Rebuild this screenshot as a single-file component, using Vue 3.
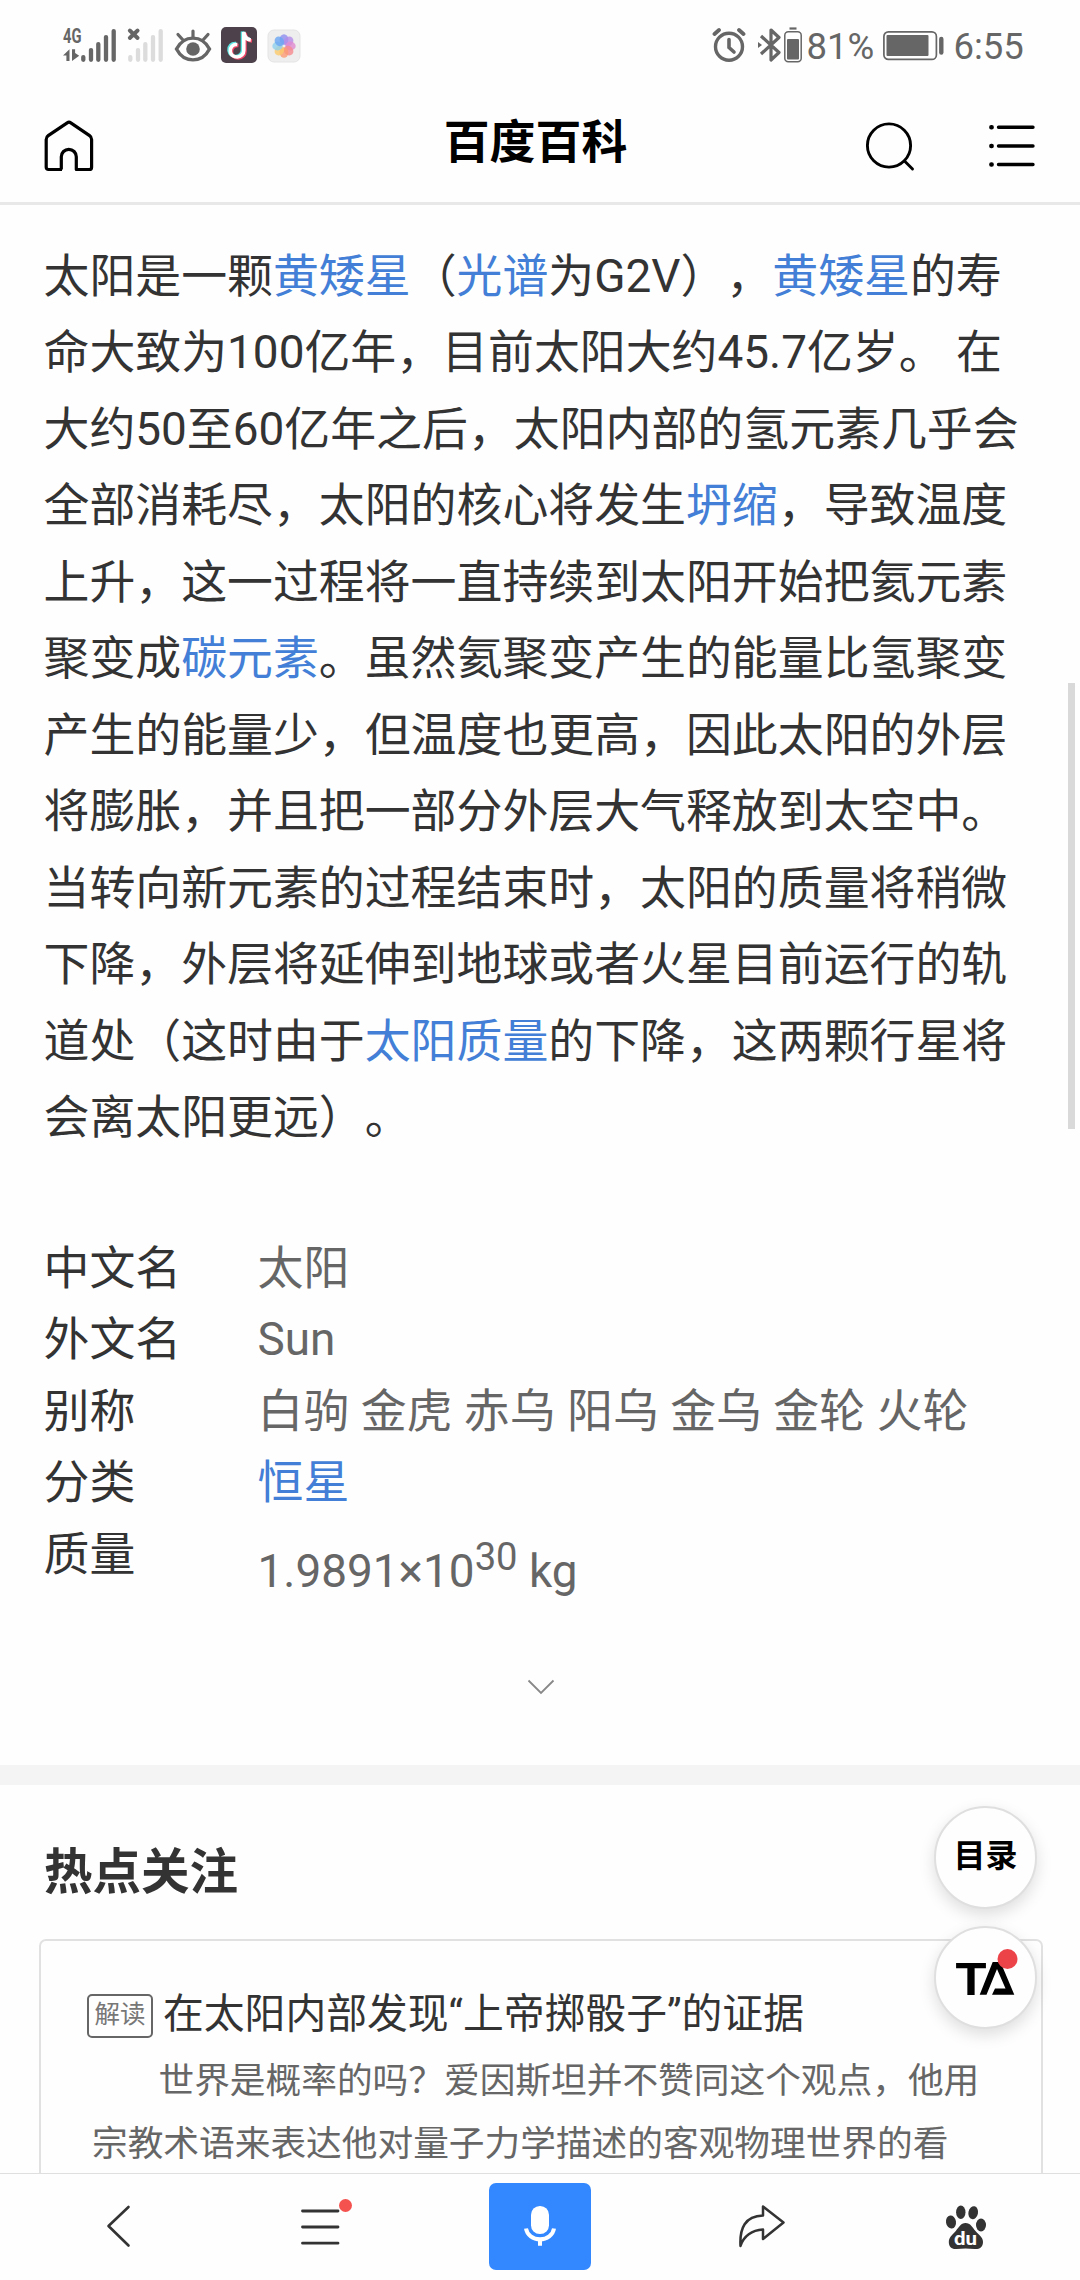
<script setup>
const paragraph = [
  [['太阳是一颗'], ['黄矮星', 1], ['（'], ['光谱', 1], ['为G2V），'], ['黄矮星', 1], ['的寿']],
  [['命大致为100亿年，目前太阳大约45.7亿岁。 在']],
  [['大约50至60亿年之后，太阳内部的氢元素几乎会']],
  [['全部消耗尽，太阳的核心将发生'], ['坍缩', 1], ['，导致温度']],
  [['上升，这一过程将一直持续到太阳开始把氦元素']],
  [['聚变成'], ['碳元素', 1], ['。虽然氦聚变产生的能量比氢聚变']],
  [['产生的能量少，但温度也更高，因此太阳的外层']],
  [['将膨胀，并且把一部分外层大气释放到太空中。']],
  [['当转向新元素的过程结束时，太阳的质量将稍微']],
  [['下降，外层将延伸到地球或者火星目前运行的轨']],
  [['道处（这时由于'], ['太阳质量', 1], ['的下降，这两颗行星将']],
  [['会离太阳更远）。']],
]

const facts = [
  { name: '中文名', value: '太阳' },
  { name: '外文名', value: 'Sun' },
  { name: '别称', value: '白驹 金虎 赤乌 阳乌 金乌 金轮 火轮' },
  { name: '分类', value: '恒星', link: true },
]

const bars = [
  { x: 20.3, y: 28 },
  { x: 28, y: 21 },
  { x: 35.3, y: 15 },
  { x: 43, y: 8 },
  { x: 50.7, y: 2 },
]

const petals = [
  { a: 0, c: '#8f8df0' },
  { a: 45, c: '#b58ce8' },
  { a: 90, c: '#e08ad0' },
  { a: 135, c: '#f58a8e' },
  { a: 180, c: '#fb9a72' },
  { a: 225, c: '#fbcb6c' },
  { a: 270, c: '#8ed0ee' },
  { a: 315, c: '#6aa5f2' },
]
</script>

<template>
  <div class="screen" lang="zh-CN">
    <div class="status">
      <svg class="signal" width="54" height="36" viewBox="0 0 54 36">
        <text x="0" y="16" font-size="20" font-weight="700" textLength="18.500" lengthAdjust="spacingAndGlyphs" fill="#666">4G</text>
        <path d="M0 28.500L6.500 22.300V34H3.400V28.500zM9 22.300H12.100V26L16.200 28.800L9 34z" fill="#666" />
        <path v-for="b in bars" :key="b.x" :d="`M${b.x} ${b.y + 2.1}V32.8`" stroke="#666" stroke-width="4.300" stroke-linecap="round" />
      </svg>
      <svg class="signal-off" width="36" height="36" viewBox="17 0 36 36">
        <path v-for="b in bars" :key="b.x" :d="`M${b.x} ${b.y + 2.1}V32.8`" stroke="#dcdcdc" stroke-width="4.300" stroke-linecap="round" />
        <path d="M19.800 3.500l7.800 7.500M27.600 3.500l-7.800 7.500" stroke="#666" stroke-width="3.900" stroke-linecap="round" />
      </svg>
      <svg class="eye" width="38" height="36" viewBox="0 0 38 36">
        <path d="M2.500 22C10 7.500 28 7.500 35.500 22C28 36.500 10 36.500 2.500 22z" fill="none" stroke="#666" stroke-width="3.400" />
        <circle cx="19" cy="22" r="6.800" fill="#666" />
        <path d="M19 10V4M9 13L4 7.500M29 13l5-5.500" stroke="#666" stroke-width="3.200" stroke-linecap="round" />
      </svg>
      <svg class="tiktok" width="36" height="36" viewBox="0 0 36 36">
        <rect width="36" height="36" rx="5" fill="#4d424b" />
        <g fill="none" stroke-width="3.600">
          <path d="M15 16.500c-4.500-.5-7.500 3-7 7 .5 3.500 3.500 6 7 6s6.500-3 6.500-6.500V4.500c.5 4.500 3 7 7 7.500" stroke="#5de6e4" />
          <path d="M17.500 18.500c-4.500-.5-7.500 3-7 7 .5 3.500 3.500 5.500 7 5.500s6.500-3 6.500-6.500V6c.5 4.500 3 7.500 7 8" stroke="#ef4868" />
          <path d="M16.300 17.500c-4.500-.5-7.500 3-7 7 .5 3.500 3.500 5.500 7 5.500s6.500-3 6.500-6.500V5c.5 4.500 3 7.500 7 8" stroke="#fff" />
        </g>
      </svg>
      <svg class="gallery" width="34" height="34" viewBox="0 0 34 34">
        <rect x="1" y="1" width="32" height="32" rx="6" fill="#eee" stroke="#e4e4e4" />
        <ellipse v-for="p in petals" :key="p.a" cx="17" cy="10.500" rx="4.400" ry="5.200" :fill="p.c" fill-opacity=".8" :transform="`rotate(${p.a} 17 17)`" />
      </svg>

      <svg class="alarm" width="34" height="36" viewBox="0 0 34 36">
        <g fill="none" stroke="#666" stroke-linecap="round">
          <circle cx="17" cy="19.700" r="13.500" stroke-width="3.400" />
          <path d="M17 12.500v8l5 4.500" stroke-width="3.600" />
          <path d="M2.500 7l4.500-4M31.500 7L27 3" stroke-width="3.800" />
        </g>
      </svg>
      <svg class="bluetooth" width="24" height="36" viewBox="0 0 24 36">
        <path d="M3 9l18 16.500-8 7.500V3l8 7.500L3 27" fill="none" stroke="#666" stroke-width="3.200" stroke-linejoin="round" />
        <path d="M0 15l4 3-4 3z" fill="#666" />
      </svg>
      <svg class="cell" width="18" height="36" viewBox="0 0 18 36">
        <path d="M5.500 1.500h7" stroke="#666" stroke-width="2.200" />
        <rect x=".8" y="4.800" width="16.400" height="30" rx="3.500" fill="none" stroke="#666" stroke-width="1.500" />
        <rect x="3" y="12" width="12" height="20.500" rx="1" fill="#666" />
      </svg>
      <span class="percent">81%</span>
      <svg class="battery" width="61" height="30" viewBox="0 0 61 30">
        <rect x=".9" y=".9" width="52.500" height="27.500" rx="4.500" fill="none" stroke="#666" stroke-width="1.700" />
        <rect x="3.500" y="4" width="42" height="21" rx="1" fill="#666" />
        <path d="M58.300 8v13.500" stroke="#666" stroke-width="4.400" stroke-linecap="round" />
      </svg>
      <span class="clock">6:55</span>
    </div>

    <header class="header">
      <svg class="home" width="52" height="54" viewBox="0 0 52 54" fill="none" stroke="#000" stroke-width="3.200" stroke-linejoin="round">
        <path d="M19 51.500H5.500Q3.200 51.500 3.200 49.200V21.500Q3.200 19 5.200 17.600L24.200 4.800Q26 3.600 27.800 4.800L46.600 17.600Q48.600 19 48.600 21.500V49.200Q48.600 51.500 46.300 51.500H33.300V38.800a7.500 7.500 0 0 0-15 0V51.500" />
      </svg>
      <h1>百度百科</h1>
      <div class="actions">
        <svg width="54" height="54" viewBox="0 0 54 54" fill="none" stroke="#000" stroke-width="2.900" stroke-linecap="round">
          <circle cx="27" cy="26.500" r="21.600" />
          <path d="M42.500 42l8 8" />
        </svg>
        <svg width="50" height="44" viewBox="0 0 50 44" stroke="#000" stroke-width="3.400" stroke-linecap="round">
          <path d="M11.500 3.300H46M11.500 22H46M11.500 40.500H46" />
          <path d="M4.300 3.300h.4M4.300 22h.4M4.300 40.500h.4" stroke-width="4.400" />
        </svg>
      </div>
    </header>

    <main class="content">
      <p class="summary">
        <span v-for="(line, i) in paragraph" :key="i" class="line"><template v-for="(seg, j) in line" :key="j"><a v-if="seg[1]">{{ seg[0] }}</a><template v-else>{{ seg[0] }}</template></template></span>
      </p>

      <dl class="facts">
        <div v-for="f in facts" :key="f.name" class="fact">
          <dt>{{ f.name }}</dt>
          <dd><a v-if="f.link">{{ f.value }}</a><template v-else>{{ f.value }}</template></dd>
        </div>
        <div class="fact">
          <dt>质量</dt>
          <dd class="mass">1.9891×10<sup>30</sup> kg</dd>
        </div>
      </dl>

      <div class="expand">
        <svg width="30" height="18" viewBox="0 0 30 18" fill="none" stroke="#888" stroke-width="1.800">
          <path d="M2.500 2.500L15 15 27.500 2.500" />
        </svg>
      </div>

      <section class="hot">
        <h2>热点关注</h2>
        <article class="card">
          <div class="card-title"><span class="tag">解读</span><span>在太阳内部发现“上帝掷骰子”的证据</span></div>
          <p><span class="line first">世界是概率的吗？爱因斯坦并不赞同这个观点，他用</span><span class="line">宗教术语来表达他对量子力学描述的客观物理世界的看</span></p>
        </article>
      </section>
    </main>

    <nav class="toolbar">
      <svg width="216" height="106" viewBox="0 0 216 106" fill="none" stroke="#333" stroke-width="2.600" stroke-linecap="round" stroke-linejoin="round">
        <path d="M128.500 33L108.500 52l20 19.500" />
      </svg>
      <svg width="216" height="106" viewBox="216 0 216 106">
        <path d="M302.500 37H338M302.500 53H338M302.500 69.200H338" stroke="#333" stroke-width="2.800" stroke-linecap="round" />
        <circle cx="345.500" cy="31.500" r="6.500" fill="#f4524f" />
      </svg>
      <div class="mic">
        <svg width="102" height="87" viewBox="0 0 102 87">
          <rect x="42" y="23" width="18" height="28" rx="8.800" fill="#fff" />
          <path d="M37 45.500c1 6.500 7 10.800 14 10.800s13-4.300 14-10.800M51 56v6.800" fill="none" stroke="#fff" stroke-width="4" />
        </svg>
      </div>
      <svg width="216" height="106" viewBox="648 0 216 106" fill="none" stroke="#333" stroke-width="2.500" stroke-linejoin="round">
        <path d="M763 32.500L783.500 48.500L763 65V55.500C752 56 743.500 62 740.500 72C739.500 54 745 42 763 41.500z" />
      </svg>
      <svg width="216" height="106" viewBox="864 0 216 106" fill="#333">
        <ellipse cx="951" cy="48" rx="5" ry="6.600" transform="rotate(-8 951 48)" />
        <ellipse cx="960.800" cy="38.200" rx="4.700" ry="6.800" />
        <ellipse cx="973.200" cy="38.700" rx="4.800" ry="6.500" transform="rotate(12 973.2 38.7)" />
        <ellipse cx="981" cy="51" rx="5" ry="6.500" />
        <path d="M965.500 49c5 0 7 4.500 10 8 3.500 4 7.500 6 7.500 11 0 6-4.500 7.500-8.500 7-6-.7-12-.7-18 0-4.500.5-7.700-2-7.700-7 0-5 4-7.500 7-11 3-3.600 5-8 9.700-8z" />
        <text x="954" y="70.500" fill="#fff" font-size="18" font-weight="700" textLength="23" lengthAdjust="spacingAndGlyphs">du</text>
      </svg>
    </nav>

    <div class="scrollbar"></div>
    <div class="floats">
      <div class="fab">目录</div>
      <div class="fab">
        <svg width="99" height="99" viewBox="0 0 99 99">
          <text x="19.500" y="66.700" font-size="47" font-weight="700" textLength="31" lengthAdjust="spacingAndGlyphs" fill="#000" class="mark">T</text>
          <path d="M43.700 66.700L56.700 34H64.500L78.300 66.700H56L59 60.500H69.500L61 41L50.500 66.700z" fill="#000" />
          <circle cx="71.500" cy="31" r="10" fill="#ec4349" />
        </svg>
      </div>
    </div>
  </div>
</template>

<style>
body {
  margin: 0;
  background: #fefefe;
}
</style>

<style scoped>
.screen {
  position: relative;
  display: flex;
  flex-direction: column;
  width: 1080px;
  height: 2280px;
  overflow: hidden;
  background: #fefefe;
  color: #333;
  font-family: Roboto, "Noto Sans CJK SC", sans-serif;
  text-spacing-trim: space-all;
}
svg {
  display: block;
  flex: none;
}
.signal {
  overflow: visible;
}
h1, h2, p, dl, dd {
  margin: 0;
}
a {
  color: #437fd6;
}
.status {
  display: flex;
  align-items: flex-start;
  height: 65px;
  padding: 27px 0 0 63px;
  box-sizing: border-box;
  flex: none;
  color: #666;
  font-size: 36.5px;
  line-height: 36px;
}
.signal-off { margin-left: 10px; }
.eye { margin-left: 11px; }
.tiktok { margin-left: 9px; }
.gallery { margin: 2px 0 0 10px; }
.alarm { margin-left: 411px; }
.bluetooth { margin-left: 12px; }
.cell { margin-left: 2px; }
.percent {
  width: 76px;
  margin: 2px 0 0 4.5px;
}
.battery { margin: 4px 0 0; }
.clock { margin: 2px 0 0 10px; }

.header {
  display: grid;
  grid-template-columns: 1fr auto 1fr;
  align-items: center;
  height: 140px;
  padding: 0 52px 0 43px;
  box-sizing: border-box;
  border-bottom: 3px solid #e8e8e8;
  flex: none;
}
.home { margin-top: 23px; }
h1 {
  height: 76px;
  padding-top: 16px;
  color: #000;
  font-size: 45.9px;
  line-height: 76px;
  font-weight: 700;
}
.actions {
  display: flex;
  align-items: center;
  justify-content: flex-end;
  gap: 71px;
  margin: 24px -9px 0 0;
}

.content {
  flex: 1;
  min-height: 0;
  overflow: hidden;
  padding-top: 32.6px;
  box-sizing: border-box;
}
.line {
  display: block;
  white-space: pre;
}
.summary {
  padding-left: 43.5px;
  font-size: 45.9px;
  line-height: 76.5px;
}
.facts {
  height: 373.4px;
  padding: 77px 0 0 43.5px;
  box-sizing: content-box;
  font-size: 45.9px;
  line-height: 71.6px;
  margin-bottom: -0.5px;
}
.fact {
  display: flex;
  height: 71.6px;
}
dt {
  width: 214px;
}
dd {
  color: #666;
  white-space: nowrap;
}
.mass {
  padding-top: 17px;
}
sup {
  font-size: 38.2px;
  line-height: 0;
  vertical-align: baseline;
  position: relative;
  top: -17px;
}
.expand {
  display: flex;
  justify-content: center;
  height: 160px;
  padding: 73px 0 0 1px;
  box-sizing: border-box;
}
.hot {
  border-top: 20px solid #f4f4f4;
}
h2 {
  height: 80px;
  padding: 47.5px 0 26.5px 44px;
  font-size: 48.5px;
  line-height: 80px;
  font-weight: 700;
}
.card {
  width: 1004px;
  height: 400px;
  margin-left: 39px;
  padding: 41px 0 0 46px;
  box-sizing: border-box;
  border: 2px solid #e1e1e1;
  border-radius: 7px;
}
.card-title {
  display: flex;
  align-items: center;
  font-size: 40.8px;
  line-height: 64px;
  white-space: nowrap;
}
.tag {
  width: 66px;
  height: 44px;
  margin: 3px 10px 0 0;
  border: 2px solid #666;
  border-radius: 5px;
  box-sizing: border-box;
  color: #777;
  font-size: 25.5px;
  line-height: 36px;
  text-align: center;
}
.card p {
  padding: 4px 0 0 5px;
  color: #666;
  font-size: 35.7px;
  line-height: 62.2px;
}
.first {
  padding-left: 66.5px;
}

.toolbar {
  display: flex;
  flex: none;
  height: 106px;
  border-top: 1px solid #dfdfdf;
}
.mic {
  width: 102px;
  height: 87px;
  margin: 9px 57px;
  border-radius: 7px;
  background: #3388ff;
}

.scrollbar {
  position: absolute;
  left: 1068px;
  top: 683px;
  width: 7px;
  height: 446px;
  background: #d9d9d9;
}
.floats {
  position: absolute;
  left: 934px;
  top: 1806px;
  display: flex;
  flex-direction: column;
  gap: 17px;
}
.fab {
  width: 103px;
  height: 103px;
  box-sizing: border-box;
  border: 2px solid #dfdfdf;
  border-radius: 50%;
  background: #fefefe;
  box-shadow: 0 6px 16px rgba(0, 0, 0, .13);
  color: #000;
  font-size: 32px;
  line-height: 97px;
  font-weight: 700;
  text-align: center;
}
.mark {
  font-family: "Liberation Sans", sans-serif;
}
</style>
